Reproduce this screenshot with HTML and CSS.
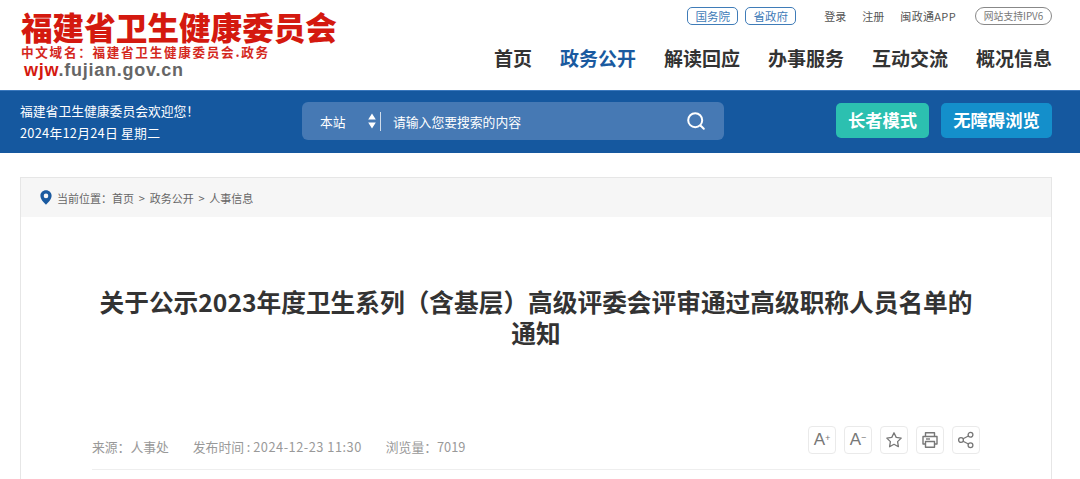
FILE: index.html
```html
<!DOCTYPE html>
<html lang="zh-CN">
<head>
<meta charset="utf-8">
<title>福建省卫生健康委员会</title>
<link rel="stylesheet" href="styles.css">
</head>
<body>
<header class="header">
  <div class="logo">
    <div class="logo-name">福建省卫生健康委员会</div>
    <div class="logo-domain">中文域名：福建省卫生健康委员会.政务</div>
    <div class="logo-url"><span class="red">wjw</span>.fujian.gov.cn</div>
  </div>
  <div class="header-right">
    <div class="toplinks">
      <a class="pill">国务院</a>
      <a class="pill">省政府</a>
      <a class="tl tl-first">登录</a>
      <a class="tl">注册</a>
      <a class="tl app">闽政通APP</a>
      <a class="ipv6">网站支持IPV6</a>
    </div>
    <nav class="nav">
      <a>首页</a>
      <a class="active">政务公开</a>
      <a>解读回应</a>
      <a>办事服务</a>
      <a>互动交流</a>
      <a>概况信息</a>
    </nav>
  </div>
</header>
<section class="band">
  <div class="welcome">
    <div>福建省卫生健康委员会欢迎您！</div>
    <div class="date">2024年12月24日 星期二</div>
  </div>
  <div class="search">
    <span class="scope">本站</span>
    <svg class="updown" width="8" height="16" viewBox="0 0 8 16"><path d="M4 0.5 L7.8 6.5 H0.2 Z M4 15.5 L7.8 9.5 H0.2 Z" fill="#fff"/></svg>
    <span class="sep"></span>
    <span class="placeholder">请输入您要搜索的内容</span>
    <svg class="magnifier" width="20" height="20" viewBox="0 0 20 20" fill="none" stroke="#fff" stroke-width="2" stroke-linecap="round"><circle cx="9.2" cy="9.2" r="7"/><path d="M14.5 14.5 L17.8 17.8"/></svg>
  </div>
  <div class="modes">
    <a class="mode elder">长者模式</a>
    <a class="mode access">无障碍浏览</a>
  </div>
</section>
<main class="card">
  <div class="crumb">
    <svg width="12" height="15" viewBox="0 0 12 15"><path fill-rule="evenodd" d="M6 0.3 C2.8 0.3 0.4 2.7 0.4 5.8 C0.4 9.2 3.6 12.6 6 14.7 C8.4 12.6 11.6 9.2 11.6 5.8 C11.6 2.7 9.2 0.3 6 0.3 Z M6 3.6 A2.3 2.3 0 1 1 6 8.2 A2.3 2.3 0 1 1 6 3.6 Z" fill="#1a5aa0"/></svg>
    <span>当前位置：首页 &gt; 政务公开 &gt; 人事信息</span>
  </div>
  <div class="article">
    <h1 class="title">关于公示2023年度卫生系列（含基层）高级评委会评审通过高级职称人员名单的通知</h1>
    <div class="meta">
      <div class="meta-text">
        <span>来源：人事处</span>
        <span>发布时间 : <span class="num">2024-12-23 11:30</span></span>
        <span>浏览量：7019</span>
      </div>
      <div class="tools">
        <a class="tool"><span class="a-big">A</span><sup class="a-sup">+</sup></a>
        <a class="tool"><span class="a-big">A</span><sup class="a-sup">−</sup></a>
        <a class="tool"><svg width="18" height="18" viewBox="0 0 18 18" fill="none" stroke="#777" stroke-width="1.3" stroke-linejoin="round"><path d="M9 1.8 L11.2 6.4 L16.2 7.1 L12.6 10.6 L13.4 15.7 L9 13.3 L4.6 15.7 L5.4 10.6 L1.8 7.1 L6.8 6.4 Z"/></svg></a>
        <a class="tool"><svg width="18" height="18" viewBox="0 0 18 18" fill="none" stroke="#777" stroke-width="1.4" stroke-linejoin="round"><path d="M4.5 5 V1.8 H13.5 V5"/><path d="M4.5 13 H2 V5.5 H16 V13 H13.5"/><path d="M4.5 10.5 H13.5 V16.2 H4.5 Z"/><path d="M5 8 H9"/></svg></a>
        <a class="tool"><svg width="18" height="18" viewBox="0 0 18 18" fill="none" stroke="#777" stroke-width="1.3"><circle cx="4" cy="9" r="2.4"/><circle cx="13.5" cy="3.8" r="2.4"/><circle cx="13.5" cy="14.2" r="2.4"/><path d="M6.1 7.8 L11.4 5 M6.1 10.2 L11.4 13"/></svg></a>
      </div>
    </div>
    <div class="rule"></div>
  </div>
</main>
</body>
</html>
```
FILE: styles.css
```css
* { box-sizing: border-box; }
html, body { margin: 0; padding: 0; height: 479px; overflow: hidden; }
body { background: #fff; color: #333; font-family: "Noto Sans CJK SC", "Liberation Sans", sans-serif; }
.header { height: 90px; padding: 0 28px 0 21px; display: flex; justify-content: space-between; }
.logo { padding-top: 9px; }
.logo-name { font-size: 31.6px; line-height: 34px; font-weight: 900; color: #d4190f; white-space: nowrap; }
.logo-domain { margin-top: 1px; font-size: 12.6px; line-height: 16px; font-weight: 700; color: #d4281e; letter-spacing: 1.7px; white-space: nowrap; }
.logo-url { margin-left: 3px; font-family: "Liberation Sans", sans-serif; font-size: 18px; line-height: 20px; font-weight: 700; color: #666; letter-spacing: 0.75px; }
.red { color: #d4190f; }
.header-right { display: flex; flex-direction: column; align-items: flex-end; }
.toplinks { display: flex; align-items: center; height: 18px; margin-top: 7px; font-size: 11.5px; color: #555; }
.pill { width: 51px; height: 18px; border: 1px solid #3f7cb8; border-radius: 5px; color: #3f7cb8; text-align: center; line-height: 16px; margin-right: 7px; }
.pill + .pill { margin-right: 0; }
.tl { margin-left: 16px; font-size: 11px; line-height: 15px; }
.tl-first { margin-left: 28px; }
.app { letter-spacing: 0.35px; }
.ipv6 { margin-left: 19px; width: 77px; height: 18px; border: 1px solid #888; border-radius: 9px; color: #777; font-size: 9.8px; line-height: 16px; text-align: center; }
.nav { display: flex; gap: 28px; margin-top: 19px; font-size: 19px; line-height: 28px; font-weight: 700; color: #333; white-space: nowrap; }
.nav .active { color: #1a5aa0; }
.band { height: 63px; background: #15589f; border-top: 1px solid #3a78bd; display: flex; align-items: flex-start; padding: 0 28px 0 20px; color: #fff; }
.welcome { width: 282px; margin-top: 9px; font-size: 12.8px; line-height: 22px; }
.date { letter-spacing: 0.25px; }
.search { width: 422px; height: 38px; margin-top: 11px; background: #4679b4; border-radius: 6px; display: flex; align-items: center; font-size: 12.8px; }
.scope { margin-left: 18px; width: 48px; }
.updown { flex: none; }
.sep { width: 1px; height: 19px; background: #d0dcea; margin: 0 12px 0 4px; }
.placeholder { flex: 1; }
.magnifier { margin-right: 18px; }
.modes { margin: 12px 0 0 auto; display: flex; gap: 12px; }
.mode { height: 35px; border-radius: 5px; text-align: center; font-size: 17.3px; font-weight: 700; line-height: 34px; color: #fff; white-space: nowrap; }
.elder { width: 93px; background: #2cc0b0; }
.access { width: 111px; background: #148fcb; }
.card { margin: 24px 28px 0 20px; border: 1px solid #e6e6e6; border-bottom: 0; height: 302px; }
.crumb { height: 39px; background: #f6f6f6; padding-left: 19px; display: flex; align-items: center; gap: 5px; font-size: 11px; word-spacing: 2.3px; color: #666; }
.article { padding: 0 71px; }
.title { margin: 69px 0 0; font-size: 24.7px; line-height: 31px; font-weight: 700; color: #333; text-align: center; padding: 0 6px; }
.meta { margin-top: 74px; height: 36px; display: flex; align-items: center; justify-content: space-between; }
.meta-text { display: flex; gap: 24px; font-size: 12.8px; color: #999; padding-top: 12px; white-space: nowrap; }
.num { letter-spacing: 0.5px; }
.tools { display: flex; gap: 8px; }
.tool { width: 28px; height: 28px; border: 1px solid #eaeaea; border-radius: 4px; display: flex; align-items: center; justify-content: center; color: #777; }
.a-big { font-size: 17px; line-height: 20px; font-family: "Liberation Sans", sans-serif; }
.a-sup { font-size: 9px; line-height: 10px; align-self: flex-start; margin-top: 6px; }
.rule { margin-top: 11px; height: 1px; background: #eeeeee; }
```
